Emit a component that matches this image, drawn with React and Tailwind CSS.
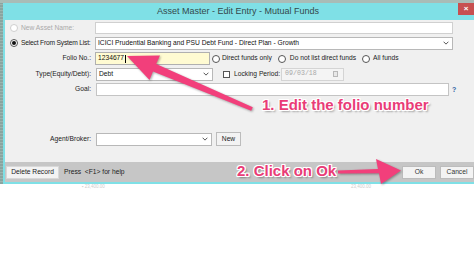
import React from "react";

const font = "font-['Liberation_Sans',Arial,sans-serif]";

function Radio({ checked, disabled }) {
  return (
    <span
      className={`flex h-[8px] w-[8px] shrink-0 items-center justify-center rounded-full border bg-white ${
        disabled ? "border-[#cfcfcf]" : "border-[#555]"
      }`}
    >
      {checked && <span className="h-[4px] w-[4px] rounded-full bg-[#111]" />}
    </span>
  );
}

function Chevron() {
  return (
    <svg viewBox="0 0 8 5" className="h-[4px] w-[6px] shrink-0">
      <path d="M0.8 0.8 L4 4 L7.2 0.8" fill="none" stroke="#444" strokeWidth="1.2" />
    </svg>
  );
}

function Label({ children }) {
  return <div className="w-[87px] shrink-0 whitespace-nowrap pr-[1px] text-right text-[#222]">{children}</div>;
}

function Button({ children, className = "" }) {
  return (
    <div
      className={`flex h-[13px] items-center justify-center whitespace-nowrap border border-[#bcbcbc] bg-[#f3f3f3] text-[#222] ${className}`}
    >
      {children}
    </div>
  );
}

export default function App() {
  return (
    <div className={`relative h-[263px] w-[474px] overflow-hidden bg-white ${font} text-[6.7px] leading-none`}>
      {/* background behind the window */}
      <div className="h-[3px] bg-[#a9bcb7]" />
      <div className="flex h-[181px]">
        <div className="w-[3px] bg-[repeating-linear-gradient(180deg,#7f9d98_0px,#a7bdb8_2px,#6f8f8a_3px)]" />

        {/* window */}
        <div className="flex flex-1 flex-col border-b-2 border-l-2 border-[#7fe0e6]">
          {/* title bar */}
          <div className="relative flex h-[17px] shrink-0 items-center justify-center bg-[#7fe0e6] text-[9px] text-[#34484b]">
            <span className="-ml-[3px]">Asset Master - Edit Entry - Mutual Funds</span>
            <div className="absolute right-0 top-0 flex h-[12px] w-[16px] items-center justify-center bg-[#c75050] text-[8px] font-bold text-white">
              ×
            </div>
          </div>

          {/* body */}
          <div className="flex flex-1 flex-col bg-[#f0f0f0] pt-[2px]">
            <div className="flex flex-col gap-[2.5px]">
              {/* new asset name */}
              <div className="flex h-[12px] items-center">
                <div className="flex w-[90px] shrink-0 items-center gap-[2px] whitespace-nowrap pl-[5px] text-[#aaaaaa]">
                  <Radio disabled />
                  <span className="ml-[1px]">New Asset Name:</span>
                </div>
                <div className="h-[12px] w-[358px] border border-[#d0d0d0] bg-white" />
              </div>

              {/* select from system list */}
              <div className="flex h-[13px] items-center">
                <div className="flex w-[90px] shrink-0 items-center gap-[2px] whitespace-nowrap pl-[5px] text-[#222]">
                  <Radio checked />
                  <span className="ml-[1px] tracking-[-0.2px]">Select From System List:</span>
                </div>
                <div className="flex h-[13px] w-[358px] items-center justify-between whitespace-nowrap border border-[#b8b8b8] bg-white pl-[2px] pr-[3px] text-[#111]">
                  <span>ICICI Prudential Banking and PSU Debt Fund - Direct Plan - Growth</span>
                  <Chevron />
                </div>
              </div>

              {/* folio */}
              <div className="flex h-[13px] items-center whitespace-nowrap">
                <Label>Folio No.:</Label>
                <div className="ml-[3px] flex h-[13px] w-[115px] items-center border border-[#b0b0b0] bg-[#fffbd2] pl-[2px] text-[#111]">
                  1234677<span className="ml-[0.5px] h-[8px] w-[1px] bg-black" />
                </div>
                <div className="ml-[2px] flex items-center gap-[2px] text-[#222]">
                  <Radio />
                  <span>Direct funds only</span>
                </div>
                <div className="ml-[6px] flex items-center gap-[4px] text-[#222]">
                  <Radio />
                  <span>Do not list direct funds</span>
                </div>
                <div className="ml-[6px] flex items-center gap-[3px] text-[#222]">
                  <Radio />
                  <span>All funds</span>
                </div>
              </div>

              {/* type */}
              <div className="flex h-[13px] items-center whitespace-nowrap">
                <Label>Type(Equity/Debt):</Label>
                <div className="ml-[4px] flex h-[13px] w-[117px] items-center justify-between border border-[#b8b8b8] bg-white pl-[2px] pr-[3px] text-[#111]">
                  <span>Debt</span>
                  <Chevron />
                </div>
                <span className="ml-[10px] h-[7px] w-[7px] border border-[#555] bg-white" />
                <span className="ml-[4px] text-[#222]">Locking Period:</span>
                <div className="ml-[1px] flex h-[13px] w-[63px] items-center justify-between border border-[#d4d4d4] bg-[#f4f4f4] pl-[3px] pr-[5px] font-['Liberation_Mono',monospace] text-[6.6px] text-[#a8a8a8]">
                  <span>09/03/18</span>
                  <span className="h-[6px] w-[5px] border border-[#b8b8b8] bg-[#e8e8e8]" />
                </div>
              </div>

              {/* goal */}
              <div className="flex h-[13px] items-center">
                <Label>Goal:</Label>
                <div className="ml-[4px] h-[13px] w-[353px] border border-[#c4c4c4] bg-white" />
                <span className="ml-[3px] text-[7px] font-bold text-[#3465a4]">?</span>
              </div>
            </div>

            {/* agent / broker */}
            <div className="mt-[36px] flex h-[14px] items-center">
              <Label>Agent/Broker:</Label>
              <div className="ml-[4px] flex h-[13px] w-[116px] items-center justify-end border border-[#b8b8b8] bg-white pr-[3px]">
                <Chevron />
              </div>
              <Button className="ml-[4px] h-[14px] w-[25px]">New</Button>
            </div>
          </div>

          {/* footer */}
          <div className="flex h-[20px] shrink-0 items-center whitespace-nowrap bg-[#c6c6c6]">
            <Button className="ml-[1px] w-[53px] border-[#d8d8d8]">Delete Record</Button>
            <span className="ml-[5px] text-[#222]">Press&nbsp; &lt;F1&gt; for help</span>
            <div className="flex-1" />
            <Button className="w-[34px] text-[#333]">Ok</Button>
            <Button className="ml-[4px] w-[34px] text-[#333]">Cancel</Button>
          </div>
        </div>
      </div>

      {/* faint text of the next row */}
      <div className="flex h-[6px] items-start whitespace-nowrap pt-[1px] text-[4.5px] leading-none text-[#cdcdcd]">
        <span className="ml-[82px]">▪ 23,400.00</span>
        <span className="ml-[246px]">23,400.00</span>
      </div>

      {/* annotation arrows */}
      <svg
        className="pointer-events-none absolute left-0 top-0 h-[263px] w-[474px] drop-shadow-[1px_1px_1px_rgba(0,0,0,0.35)]"
        viewBox="0 0 474 263"
      >
        <polygon
          points="127,56 160,55.5 156.2,64 252.8,107.2 251.2,110.8 153,71.4 149.5,80"
          fill="#f23f7b"
        />
        <polygon
          points="338,170.6 378,169 376,159 401,170.5 381,184 379,173.2 338,173.6"
          fill="#f23f7b"
        />
      </svg>

      <div className="absolute left-[262px] top-[97px] whitespace-nowrap text-[15px] font-bold leading-none text-[#e93c77] [text-shadow:1px_0_0_#fff,-1px_0_0_#fff,0_1px_0_#fff,0_-1px_0_#fff,1px_1px_0_#fff,-1px_-1px_0_#fff,1px_-1px_0_#fff,-1px_1px_0_#fff,2px_2px_2px_rgba(0,0,0,0.35)]">
        1. Edit the folio number
      </div>
      <div className="absolute left-[237px] top-[163px] whitespace-nowrap text-[15px] font-bold leading-none text-[#e93c77] [text-shadow:1px_0_0_#fff,-1px_0_0_#fff,0_1px_0_#fff,0_-1px_0_#fff,1px_1px_0_#fff,-1px_-1px_0_#fff,1px_-1px_0_#fff,-1px_1px_0_#fff,2px_2px_2px_rgba(0,0,0,0.35)]">
        2. Click on Ok
      </div>
    </div>
  );
}
